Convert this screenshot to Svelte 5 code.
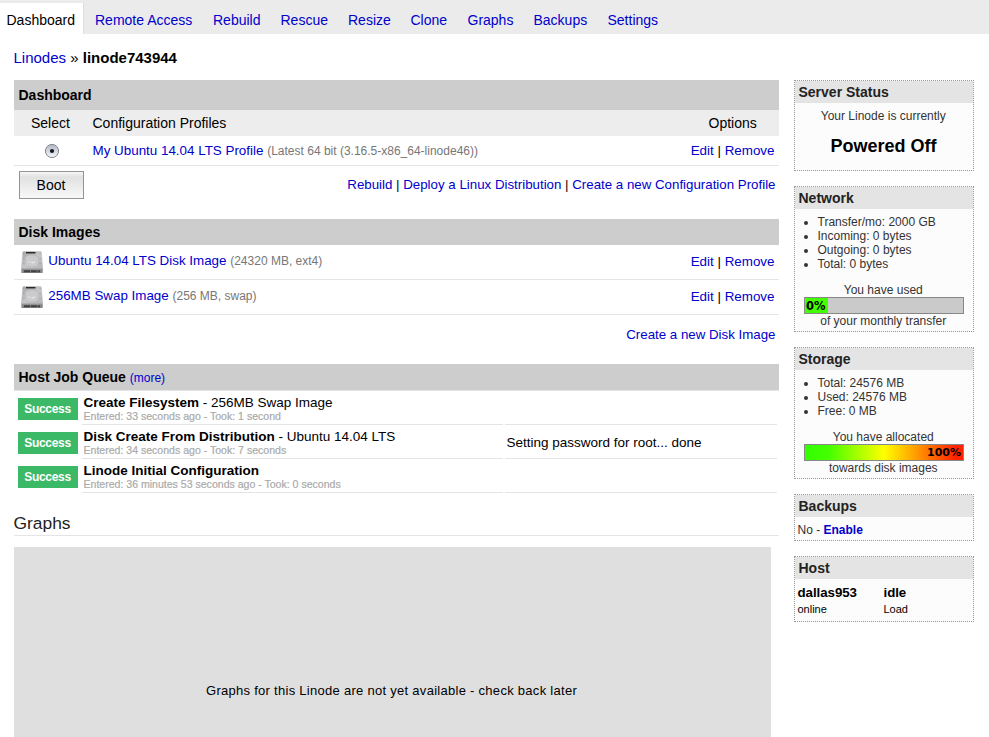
<script>
  const tabs = ['Remote Access', 'Rebuild', 'Rescue', 'Resize', 'Clone', 'Graphs', 'Backups', 'Settings'];
  const tabWidths = [118, 67.5, 67.5, 62.5, 57, 66, 74, 71];
  const disks = [
    { name: 'Ubuntu 14.04 LTS Disk Image', info: '(24320 MB, ext4)' },
    { name: '256MB Swap Image', info: '(256 MB, swap)' }
  ];
  const jobs = [
    { name: 'Create Filesystem', detail: ' - 256MB Swap Image', time: 'Entered: 33 seconds ago - Took: 1 second', note: '' },
    { name: 'Disk Create From Distribution', detail: ' - Ubuntu 14.04 LTS', time: 'Entered: 34 seconds ago - Took: 7 seconds', note: 'Setting password for root... done' },
    { name: 'Linode Initial Configuration', detail: '', time: 'Entered: 36 minutes 53 seconds ago - Took: 0 seconds', note: '' }
  ];
  const network = ['Transfer/mo: 2000 GB', 'Incoming: 0 bytes', 'Outgoing: 0 bytes', 'Total: 0 bytes'];
  const storage = ['Total: 24576 MB', 'Used: 24576 MB', 'Free: 0 MB'];
</script>

{#snippet options()}
  <span class="opts"><a href="#edit">Edit</a> | <a href="#remove">Remove</a></span>
{/snippet}

<div class="page">
  <nav>
    <span class="active">Dashboard</span>
    {#each tabs as tab, i}
      <a href="#tab" style:width="{tabWidths[i]}px">{tab}</a>
    {/each}
  </nav>
  <div class="crumbs"><a href="#linodes">Linodes</a> » <b>linode743944</b></div>

  <div class="columns">
    <main>
      <section class="dash">
        <h2>Dashboard</h2>
        <div class="thead"><span class="sel">Select</span><span class="grow">Configuration Profiles</span><span class="opt">Options</span></div>
        <div class="profile">
          <span class="sel">
            <svg width="16" height="16" viewBox="0 0 16 16">
              <defs><linearGradient id="radio" x1="0" y1="0" x2="0" y2="1"><stop offset="0" stop-color="#b4b7c4" /><stop offset=".5" stop-color="#d3d7e2" /><stop offset="1" stop-color="#f5f7fa" /></linearGradient></defs>
              <circle cx="8" cy="8" r="6.6" fill="url(#radio)" stroke="#85878f" stroke-width="1" /><circle cx="8" cy="8" r="2.1" fill="#15171c" />
            </svg>
          </span>
          <span class="grow"><a href="#profile">My Ubuntu 14.04 LTS Profile</a> <small>(Latest 64 bit (3.16.5-x86_64-linode46))</small></span>
          {@render options()}
        </div>
        <div class="actions">
          <button>Boot</button>
          <span><a href="#rebuild">Rebuild</a> | <a href="#deploy">Deploy a Linux Distribution</a> | <a href="#new">Create a new Configuration Profile</a></span>
        </div>
      </section>

      <section class="disks">
        <h2>Disk Images</h2>
        {#each disks as disk}
          <div class="disk">
            <svg width="22" height="23" viewBox="0 0 22 23">
              <defs><linearGradient id="metal" x1="0" y1="0" x2="1" y2="1"><stop offset="0" stop-color="#a4a4a6" /><stop offset=".5" stop-color="#c6c6c8" /><stop offset="1" stop-color="#b4b4b6" /></linearGradient></defs>
              <path d="M2.5 .4h17q.7 0 .8.8l1.4 16.8H.4L1.8 1.2q0-.8.7-.8z" fill="url(#metal)" stroke="#bdbdbd" stroke-width=".6" />
              <path d="M2.8 2v14M19.2 2v14" stroke="#8f8f91" stroke-width=".7" stroke-dasharray="1 4" />
              <path d="M.4 17.8h21.3v3.4q0 .9-1 .9H1.4q-1 0-1-.9z" fill="#858587" />
              <path d="M.6 18h20.8" stroke="#a8a8aa" stroke-width=".8" />
              <path d="M3 20.3h16" stroke="#424244" stroke-width="2" stroke-dasharray="6 .8" />
              <path d="M5 1.7h9.5" stroke="#29292b" stroke-width="1.5" />
              <path d="M4.3 7q1-3 6.5-3t6.7 3v6q-1.5 3-6.7 3t-6.5-3z" fill="#cbcbcd" stroke="#b3b3b5" stroke-width=".5" />
              <path d="M7.5 10.7q3.2 3 6.5 0" fill="none" stroke="#f2f2f2" stroke-width="1" />
              <path d="M9 11.5l1 1" stroke="#858587" stroke-width=".6" />
            </svg>
            <span class="grow"><a href="#disk">{disk.name}</a> <small>{disk.info}</small></span>
            {@render options()}
          </div>
        {/each}
        <div class="newdisk"><a href="#newdisk">Create a new Disk Image</a></div>
      </section>

      <section class="jobs">
        <h2>Host Job Queue <a href="#more">(more)</a></h2>
        {#each jobs as job}
          <div class="job">
            <span class="badge">Success</span>
            <div class="what"><div><b>{job.name}</b>{job.detail}</div><div class="time">{job.time}</div></div>
            <div class="note">{job.note}</div>
          </div>
        {/each}
      </section>

      <h3>Graphs</h3>
      <div class="graph"><span>Graphs for this Linode are not yet available - check back later</span></div>
    </main>

    <aside>
      <div class="box status">
        <h4>Server Status</h4>
        <p>Your Linode is currently</p>
        <strong>Powered Off</strong>
      </div>
      <div class="box network">
        <h4>Network</h4>
        <ul>{#each network as item}<li>{item}</li>{/each}</ul>
        <p>You have used</p>
        <div class="bar used"><span>0%</span></div>
        <p>of your monthly transfer</p>
      </div>
      <div class="box storage">
        <h4>Storage</h4>
        <ul>{#each storage as item}<li>{item}</li>{/each}</ul>
        <p>You have allocated</p>
        <div class="bar full"><span>100%</span></div>
        <p>towards disk images</p>
      </div>
      <div class="box backups">
        <h4>Backups</h4>
        <div class="enable">No - <a href="#enable">Enable</a></div>
      </div>
      <div class="box host">
        <h4>Host</h4>
        <div class="hostrow">
          <div><b>dallas953</b><span>online</span></div>
          <div><b>idle</b><span>Load</span></div>
        </div>
      </div>
    </aside>
  </div>
</div>

<style>
  :global(body) { margin: 0; background: #fff; }
  .page { width: 989px; height: 737px; overflow: hidden; font: 14px/16px "Liberation Sans", Arial, sans-serif; color: #000; }
  .page * { box-sizing: border-box; }
  a { color: #0000cc; text-decoration: none; }
  nav { display: flex; height: 34px; padding-top: 3px; background: #ebebeb; white-space: nowrap; }
  .active { width: 84px; padding: 9px 0 0 6.5px; background: #fff; border-right: 1px solid #ddd; margin-right: 1px; height: 31px; }
  nav a { padding: 9px 0 0 10px; flex: none; }
  .crumbs { height: 46px; padding: 15px 13.5px 0; font-size: 15px; line-height: 18px; }
  .crumbs b { font-size: 15px; }
  .columns { display: flex; padding-left: 14px; }
  main { width: 765px; margin-right: 15px; }
  h2 { margin: 0; padding-left: 4.5px; height: 26px; line-height: 26px; font-size: 14px; background: #cdcdcd; }
  .dash { height: 139px; }
  .dash h2 { height: 30px; line-height: 30px; }
  .thead { display: flex; height: 26px; line-height: 26px; background: #ededed; }
  .sel { width: 78.5px; flex: none; padding-left: 17px; }
  .opt { width: 70.5px; }
  .grow { flex: 1; }
  small { font-size: 12px; color: #777; }
  .profile { display: flex; height: 30px; padding-right: 4.5px; border-bottom: 1px solid #e4e4e4; font-size: 13.4px; line-height: 29px; }
  .profile .sel { padding: 7px 0 0 30px; }
  .profile svg { display: block; }
  .actions { display: flex; justify-content: space-between; padding: 5px 3.5px 0 5px; font-size: 13.3px; }
  button { width: 65px; height: 28px; padding: 0 1px 0 0; border: 1px solid #949494; background: linear-gradient(#f6f6f6, #e1e1e1 20%, #f8f8f8); font: 14px "Liberation Sans", Arial, sans-serif; color: #000; }
  .actions span { line-height: 27px; }
  .disks { height: 145px; }
  .disk { display: flex; height: 35px; padding: 0 4.5px 0 7px; border-bottom: 1px solid #e4e4e4; font-size: 13.38px; line-height: 31px; }
  .disk svg { margin: 6px 5.3px 0 0; flex: none; }
  .disk .opts { line-height: 33px; }
  .newdisk { text-align: right; padding: 12px 3.5px 0 0; font-size: 13.3px; }
  .jobs { height: 146px; }
  .jobs h2 { height: 27px; border-bottom: 1px solid #e4e4e4; }
  .jobs h2 a { font-size: 12px; font-weight: normal; }
  .job { display: flex; height: 34px; font-size: 13.5px; }
  .badge { width: 60px; height: 22px; margin: 7px 4px 0; padding-right: 1px; background: #3cb966; color: #fff; font-size: 12px; letter-spacing: -.3px; font-weight: bold; line-height: 22px; text-align: center; }
  .what { width: 421px; height: 34px; padding: 4px 0 0 1.5px; border-bottom: 1px solid #e4e4e4; margin-right: 2px; }
  .time { color: #aaa; font-size: 10.55px; line-height: 12px; margin-top: -1px; -webkit-text-stroke: .2px #aaa; }
  .note { width: 272px; border-bottom: 1px solid #e4e4e4; padding-left: 1.5px; line-height: 35px; }
  h3 { margin: 0 0 0 -.5px; height: 26px; border-bottom: 1px solid #e4e4e4; font-size: 17.4px; font-weight: normal; line-height: 27px; color: #222; }
  .graph { width: 757px; height: 260px; margin-top: 11px; padding-top: 135px; background: #dfdfdf; text-align: center; }
  .graph span { font-size: 13px; letter-spacing: .28px; margin-right: 2px; }
  aside { width: 180px; font-size: 12px; line-height: 14px; color: #333; }
  .box { border: 1px dotted #999; background: #fcfcfc; }
  h4 { margin: 0; height: 22px; padding-left: 3.5px; background: #e4e4e4; color: #222; font-size: 14px; line-height: 22px; }
  .box p { margin: 0; text-align: center; padding-right: 1.5px; }
  .status { height: 91px; margin-bottom: 15px; }
  .status p { padding: 6px 1.5px 12px 0; }
  strong { display: block; text-align: center; font-size: 18px; line-height: 22px; color: #000; padding-right: 1px; }
  .network { height: 146px; margin-bottom: 15px; }
  .storage { height: 132px; margin-bottom: 15px; }
  ul { margin: 6px 0 12px; padding-left: 22.5px; list-style: none; }
  li { display: flex; align-items: center; }
  li::before { content: ''; width: 4px; height: 4px; margin: 2px 9.5px 0 -13.5px; border-radius: 50%; background: #333; }
  .bar { height: 17px; margin: 0 9px; border: 1px solid #888; font: bold 11px/16px "DejaVu Sans", sans-serif; color: #000; }
  .used { background: #cacaca; }
  .used span { display: block; width: 23px; padding-left: 1px; background: #4f0; height: 15px; font-size: 11.5px; }
  .full { background: linear-gradient(90deg, #3f0, #4f0 15%, #ff0 50%, #f20 95%); text-align: right; padding-right: 2px; }
  .backups { height: 47px; margin-bottom: 15px; }
  .enable { padding: 6px 2.5px; }
  .enable a { font-weight: bold; }
  .host { height: 66px; }
  .hostrow { display: flex; padding: 5px 2.5px; color: #000; }
  .hostrow div { width: 86px; }
  .hostrow b, .hostrow span { display: block; line-height: 17px; }
  .hostrow b { font-size: 13.3px; letter-spacing: -.05px; }
  .hostrow span { font-size: 11px; }
</style>
